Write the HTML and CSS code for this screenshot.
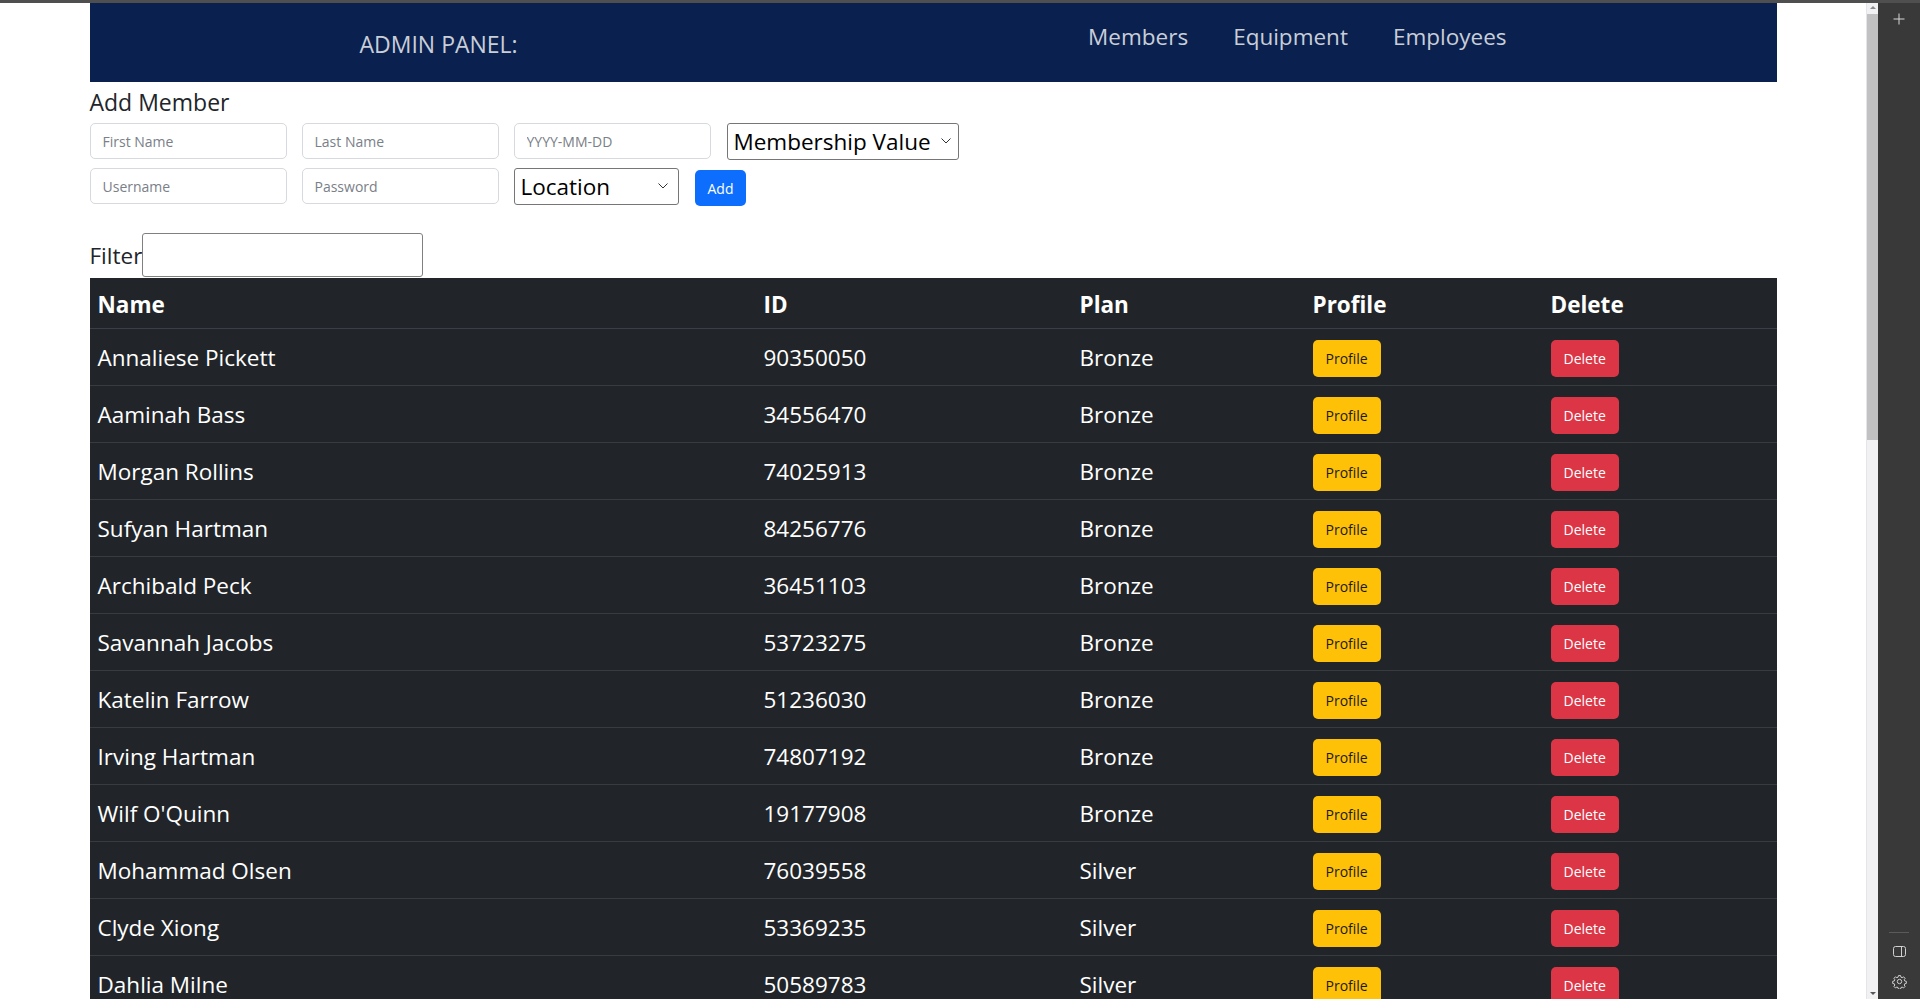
FILE: index.html
```html
<!DOCTYPE html>
<html lang="en">
<head>
<meta charset="utf-8">
<title>Admin Panel</title>
<link rel="stylesheet" href="styles.css">
</head>
<body>
<div class="topstrip"></div>
<div class="window">
  <main class="viewport">
    <div class="container">
      <nav class="navbar">
        <span class="brand">ADMIN PANEL:</span>
        <ul class="nav-links">
          <li>Members</li>
          <li>Equipment</li>
          <li>Employees</li>
        </ul>
      </nav>

      <h4 class="section-title">Add Member</h4>
      <form class="member-form">
        <div class="form-row">
          <input class="form-control" type="text" placeholder="First Name">
          <input class="form-control" type="text" placeholder="Last Name">
          <input class="form-control" type="text" placeholder="YYYY-MM-DD">
          <div class="select-wrap select-membership">
            <select class="form-select"><option>Membership Value</option></select>
            <svg class="chevron" viewBox="0 0 10 6" width="10" height="6"><path d="M0.5 0.5 L5 5 L9.5 0.5" fill="none" stroke="#333" stroke-width="1"/></svg>
          </div>
        </div>
        <div class="form-row">
          <input class="form-control" type="text" placeholder="Username">
          <input class="form-control" type="password" placeholder="Password">
          <div class="select-wrap select-location">
            <select class="form-select"><option>Location</option></select>
            <svg class="chevron" viewBox="0 0 10 6" width="10" height="6"><path d="M0.5 0.5 L5 5 L9.5 0.5" fill="none" stroke="#333" stroke-width="1"/></svg>
          </div>
          <button class="btn btn-add" type="button">Add</button>
        </div>
      </form>

      <div class="filter-row">
        <label class="filter-label" for="filter">Filter</label>
        <input class="filter-input" id="filter" type="text">
      </div>

      <table class="members-table">
        <colgroup>
          <col class="c-name"><col class="c-id"><col class="c-plan"><col class="c-profile"><col class="c-delete">
        </colgroup>
        <thead>
          <tr><th>Name</th><th>ID</th><th>Plan</th><th>Profile</th><th>Delete</th></tr>
        </thead>
        <tbody>
          <tr><td>Annaliese Pickett</td><td>90350050</td><td>Bronze</td><td class="btn-cell"><button class="btn btn-profile">Profile</button></td><td class="btn-cell"><button class="btn btn-delete">Delete</button></td></tr>
          <tr><td>Aaminah Bass</td><td>34556470</td><td>Bronze</td><td class="btn-cell"><button class="btn btn-profile">Profile</button></td><td class="btn-cell"><button class="btn btn-delete">Delete</button></td></tr>
          <tr><td>Morgan Rollins</td><td>74025913</td><td>Bronze</td><td class="btn-cell"><button class="btn btn-profile">Profile</button></td><td class="btn-cell"><button class="btn btn-delete">Delete</button></td></tr>
          <tr><td>Sufyan Hartman</td><td>84256776</td><td>Bronze</td><td class="btn-cell"><button class="btn btn-profile">Profile</button></td><td class="btn-cell"><button class="btn btn-delete">Delete</button></td></tr>
          <tr><td>Archibald Peck</td><td>36451103</td><td>Bronze</td><td class="btn-cell"><button class="btn btn-profile">Profile</button></td><td class="btn-cell"><button class="btn btn-delete">Delete</button></td></tr>
          <tr><td>Savannah Jacobs</td><td>53723275</td><td>Bronze</td><td class="btn-cell"><button class="btn btn-profile">Profile</button></td><td class="btn-cell"><button class="btn btn-delete">Delete</button></td></tr>
          <tr><td>Katelin Farrow</td><td>51236030</td><td>Bronze</td><td class="btn-cell"><button class="btn btn-profile">Profile</button></td><td class="btn-cell"><button class="btn btn-delete">Delete</button></td></tr>
          <tr><td>Irving Hartman</td><td>74807192</td><td>Bronze</td><td class="btn-cell"><button class="btn btn-profile">Profile</button></td><td class="btn-cell"><button class="btn btn-delete">Delete</button></td></tr>
          <tr><td>Wilf O'Quinn</td><td>19177908</td><td>Bronze</td><td class="btn-cell"><button class="btn btn-profile">Profile</button></td><td class="btn-cell"><button class="btn btn-delete">Delete</button></td></tr>
          <tr><td>Mohammad Olsen</td><td>76039558</td><td>Silver</td><td class="btn-cell"><button class="btn btn-profile">Profile</button></td><td class="btn-cell"><button class="btn btn-delete">Delete</button></td></tr>
          <tr><td>Clyde Xiong</td><td>53369235</td><td>Silver</td><td class="btn-cell"><button class="btn btn-profile">Profile</button></td><td class="btn-cell"><button class="btn btn-delete">Delete</button></td></tr>
          <tr><td>Dahlia Milne</td><td>50589783</td><td>Silver</td><td class="btn-cell"><button class="btn btn-profile">Profile</button></td><td class="btn-cell"><button class="btn btn-delete">Delete</button></td></tr>
        </tbody>
      </table>
    </div>
  </main>

  <div class="scrollbar">
    <div class="sb-arrow sb-up"></div>
    <div class="sb-thumb"></div>
    <div class="sb-track"></div>
    <div class="sb-arrow sb-down"></div>
  </div>

  <aside class="sidebar">
    <svg class="sb-icon plus" width="12" height="12" viewBox="0 0 12 12"><path d="M6 0.5 V11.5 M0.5 6 H11.5" stroke="#d8d8d8" stroke-width="1" fill="none"/></svg>
    <div class="sidebar-bottom">
      <div class="sidebar-sep"></div>
      <svg class="sb-icon" width="13" height="11" viewBox="0 0 13 11"><rect x="0.5" y="0.5" width="12" height="10" rx="2" fill="none" stroke="#d0d0d0" stroke-width="1"/><path d="M8.5 0.5 V10.5" stroke="#d0d0d0" stroke-width="1"/></svg>
      <svg class="sb-icon gear" width="15" height="15" viewBox="0 0 24 24"><path fill="none" stroke="#d0d0d0" stroke-width="1.6" d="M12 15.5a3.5 3.5 0 1 0 0-7 3.5 3.5 0 0 0 0 7z"/><path fill="none" stroke="#d0d0d0" stroke-width="1.6" d="M10.3 2.5h3.4l.6 2.6 1.9.8 2.3-1.4 2.4 2.4-1.4 2.3.8 1.9 2.6.6v3.4l-2.6.6-.8 1.9 1.4 2.3-2.4 2.4-2.3-1.4-1.9.8-.6 2.6h-3.4l-.6-2.6-1.9-.8-2.3 1.4-2.4-2.4 1.4-2.3-.8-1.9-2.6-.6v-3.4l2.6-.6.8-1.9-1.4-2.3 2.4-2.4 2.3 1.4 1.9-.8z"/></svg>
    </div>
  </aside>
</div>
</body>
</html>
```

FILE: styles.css
```css
* { box-sizing: border-box; }

html, body {
  margin: 0;
  padding: 0;
  height: 100%;
  overflow: hidden;
}

body {
  font-family: "Open Sans", "Noto Sans", Arial, sans-serif;
  color: #212529;
  background: #ffffff;
}

.topstrip {
  height: 3px;
  background: #4f4f4f;
}

.window {
  display: flex;
  height: calc(100vh - 3px);
}

.viewport {
  flex: 1;
  overflow: hidden;
  background: #ffffff;
}

.container {
  width: 1687px;
  margin: 0 auto;
}

/* Navbar */
.navbar {
  height: 79px;
  background: #0a2150;
  display: flex;
  justify-content: space-between;
  align-items: flex-start;
  padding: 0 270px;
}

.brand {
  font-size: 23px;
  line-height: 28px;
  padding-top: 27px;
  color: #c9ced8;
}

.nav-links {
  list-style: none;
  margin: 0;
  padding: 20px 0 0;
  display: flex;
  gap: 45px;
  font-size: 22.5px;
  line-height: 28px;
  color: #c9ced8;
}

/* Add member */
.section-title {
  margin: 6px 0 0;
  font-size: 23px;
  line-height: 28px;
  font-weight: 400;
  color: #212529;
}

.member-form {
  margin-top: 7px;
  display: flex;
  flex-direction: column;
  gap: 8px;
}

.form-row {
  display: flex;
  align-items: flex-start;
  gap: 15px;
}

.form-control {
  width: 197px;
  height: 36px;
  padding: 0 12px;
  border: 1px solid #d6d9dd;
  border-radius: 5px;
  font-family: inherit;
  font-size: 14px;
  color: #212529;
  background: #fff;
}

.form-control::placeholder {
  color: #7a8088;
}

.select-wrap {
  position: relative;
}

.select-membership { width: 232px; margin-left: 1px; }
.select-location { width: 165px; }

.form-select {
  appearance: none;
  -webkit-appearance: none;
  width: 100%;
  height: 37px;
  padding: 0 22px 0 6px;
  border: 1px solid #767676;
  border-radius: 3px;
  background: #fff;
  font-family: inherit;
  font-size: 22.5px;
  color: #000;
}

.chevron {
  position: absolute;
  right: 8px;
  top: 15px;
  pointer-events: none;
}

.select-location .chevron { right: 11px; }

.btn {
  display: inline-block;
  border: none;
  border-radius: 5px;
  font-family: inherit;
  font-size: 14px;
  cursor: pointer;
}

.btn-add {
  height: 36px;
  padding: 0 13px;
  margin-top: 2px;
  margin-left: 1px;
  background: #0d6efd;
  color: #fff;
}

/* Filter */
.filter-row {
  margin-top: 27px;
  display: flex;
  align-items: flex-end;
}

.filter-label {
  width: 52px;
  white-space: nowrap;
  font-size: 22.5px;
  line-height: 28px;
  padding-bottom: 7px;
  color: #212529;
}

.filter-input {
  width: 281px;
  height: 44px;
  border: 1px solid #808080;
  border-radius: 3px;
  background: #fff;
}

/* Table */
.members-table {
  margin-top: 1px;
  width: 100%;
  table-layout: fixed;
  border-collapse: collapse;
  background: #212529;
  color: #fff;
}

.c-name { width: 666px; }
.c-id { width: 316px; }
.c-plan { width: 233px; }
.c-profile { width: 238px; }
.c-delete { width: 234px; }

.members-table th {
  text-align: left;
  font-weight: 700;
  font-size: 22.5px;
  line-height: 46px;
  padding: 4px 8px 0;
  border-bottom: 1px solid #3a3e48;
}

.members-table td {
  height: 57px;
  padding: 0 8px;
  font-size: 22.5px;
  vertical-align: middle;
  border-bottom: 1px solid #373c3f;
  white-space: nowrap;
}

.members-table td.btn-cell {
  padding-top: 3px;
}

.btn-profile,
.btn-delete {
  height: 37px;
  padding: 0 13px;
  vertical-align: middle;
}

.btn-profile {
  background: #ffc107;
  color: #1a1a1a;
}

.btn-delete {
  background: #dc3545;
  color: #fff;
}

/* Fake scrollbar */
.scrollbar {
  width: 12px;
  display: flex;
  flex-direction: column;
  background: #f1f1f4;
  border-left: 1px solid #e4e4ea;
}

.sb-arrow {
  height: 11px;
  position: relative;
}

.sb-up::after,
.sb-down::after {
  content: "";
  position: absolute;
  left: 3px;
  border-left: 3px solid transparent;
  border-right: 3px solid transparent;
}

.sb-up::after {
  top: 3px;
  border-bottom: 3px solid #8a8a8a;
}

.sb-down::after {
  top: 4px;
  border-top: 3px solid #555;
}

.sb-thumb {
  height: 426px;
  background: #c1c1c1;
}

.sb-track {
  flex: 1;
}

/* Browser sidebar */
.sidebar {
  width: 42px;
  background: #393939;
  display: flex;
  flex-direction: column;
  justify-content: space-between;
  align-items: center;
  padding: 10px 0 10px;
}

.sb-icon {
  display: block;
}

.sidebar-bottom {
  display: flex;
  flex-direction: column;
  align-items: center;
}

.sidebar-sep {
  width: 20px;
  height: 1px;
  background: #5a5a5a;
  margin-bottom: 13px;
}

.sidebar-bottom .gear {
  margin-top: 17px;
}
```
